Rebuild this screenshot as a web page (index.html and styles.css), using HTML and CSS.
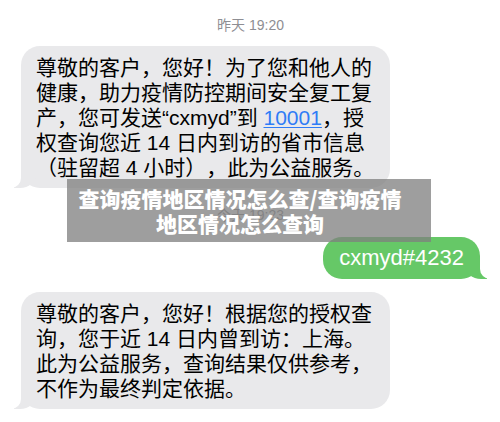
FILE: index.html
```html
<!DOCTYPE html>
<html lang="zh-CN">
<head>
<meta charset="utf-8">
<title>查询疫情地区情况怎么查</title>
<link rel="stylesheet" href="styles.css">
</head>
<body>
<div class="thread">
  <div class="stamp">昨天 19:20</div>
  <div class="bubble in">尊敬的客户，您好！为了您和他人的<br>健康，助力疫情防控期间安全复工复<br>产，您可发送“cxmyd”到 <a class="link">10001</a>，授<br>权查询您近 14 日内到访的省市信息<br>（驻留超 4 小时），此为公益服务。</div>
  <div class="stamp stamp2">今天 19:23</div>
  <div class="bubble out">cxmyd#4232</div>
  <div class="bubble in in2">尊敬的客户，您好！根据您的授权查<br>询，您于近 14 日内曾到访：上海。<br>此为公益服务，查询结果仅供参考，<br>不作为最终判定依据。</div>
</div>
<div class="caption">查询疫情地区情况怎么查/查询疫情<br>地区情况怎么查询</div>
</body>
</html>
```
FILE: styles.css
```css
html, body {
  margin: 0;
  padding: 0;
  background: #ffffff;
}
body {
  width: 500px;
  height: 422px;
  overflow: hidden;
  position: relative;
  font-family: "Liberation Sans", "Noto Sans CJK SC", sans-serif;
  text-spacing-trim: space-all;
}
.thread {
  display: flex;
  flex-direction: column;
  padding: 17px 20px 0 21px;
}
.stamp {
  align-self: center;
  font-size: 14px;
  line-height: 17px;
  color: #8e8e93;
  margin-bottom: 12px;
}
.stamp2 {
  margin-top: 19px;
  margin-bottom: 13px;
}
.bubble {
  position: relative;
  z-index: 0;
  font-size: 21px;
  line-height: 25px;
  white-space: nowrap;
  border-radius: 19px;
}
.bubble.in {
  align-self: flex-start;
  width: 354px;
  padding: 9px 0 8px 15px;
  background: #e9e9eb;
  color: #000;
}
.bubble.in2 {
  margin-top: 13px;
}
.bubble.in::before {
  content: "";
  position: absolute;
  z-index: -1;
  bottom: 0;
  left: -7px;
  width: 22px;
  height: 20px;
  background: #e9e9eb;
  border-bottom-right-radius: 16px 14px;
}
.bubble.in::after {
  content: "";
  position: absolute;
  z-index: -1;
  bottom: 0;
  left: -10px;
  width: 10px;
  height: 22px;
  background: #ffffff;
  border-bottom-right-radius: 10px;
}
.bubble.out {
  align-self: flex-end;
  font-size: 22px;
  padding: 8px 16px 9px 16px;
  background: #66c867;
  color: #ffffff;
}
.bubble.out::before {
  content: "";
  position: absolute;
  z-index: -1;
  bottom: 0;
  right: -7px;
  width: 22px;
  height: 20px;
  background: #66c867;
  border-bottom-left-radius: 16px 14px;
}
.bubble.out::after {
  content: "";
  position: absolute;
  z-index: -1;
  bottom: 0;
  right: -10px;
  width: 10px;
  height: 22px;
  background: #ffffff;
  border-bottom-left-radius: 10px;
}
.link {
  color: #2f7cf6;
  text-decoration: underline;
  text-decoration-thickness: 1px;
  text-underline-offset: 2px;
}
.caption {
  position: absolute;
  left: 67px;
  top: 179px;
  width: 346px;
  height: 63px;
  padding-right: 18px;
  display: flex;
  align-items: center;
  justify-content: center;
  text-align: center;
  background: rgba(128, 128, 128, 0.76);
  color: #ffffff;
  font-family: "Noto Sans CJK SC", sans-serif;
  font-weight: 900;
  font-size: 21px;
  line-height: 25px;
}
```
